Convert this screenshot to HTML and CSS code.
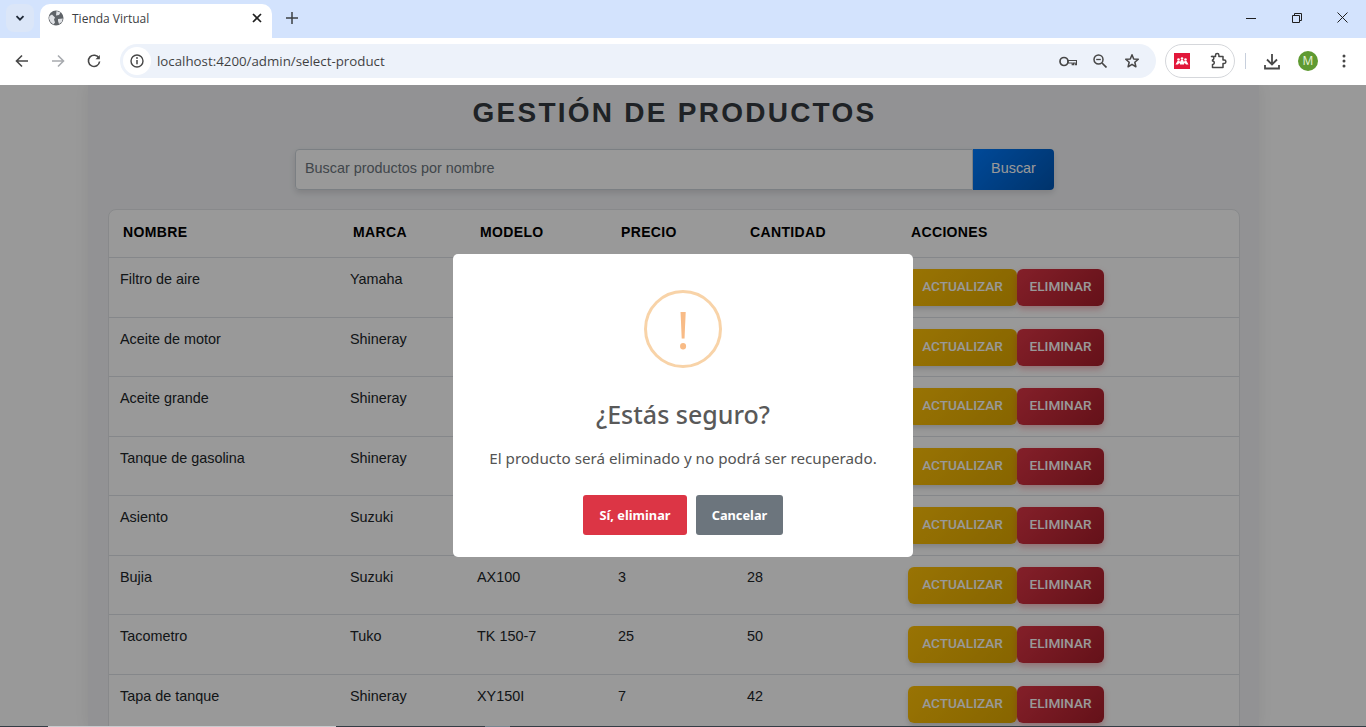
FILE: index.html
```html
<!DOCTYPE html>
<html lang="es">
<head>
<meta charset="utf-8">
<title>Tienda Virtual</title>
<link rel="stylesheet" href="styles.css">
</head>
<body>
<div class="browser">
  <div class="tabstrip">
    <div class="tab-search"><svg width="12" height="12" viewBox="0 0 12 12"><path d="M2.500 4.200 6 7.700l3.500-3.500" fill="none" stroke="#1f2937" stroke-width="1.800"/></svg></div>
    <div class="tab">
      <svg class="favicon" width="16" height="16" viewBox="0 0 16 16"><circle cx="8" cy="8" r="7.500" fill="#5f6368"/><path d="M1.500 6 4 4.500 7 7.500 6 9.500 7 12.500 5.500 14.500 2.500 12 1 8.500ZM8.500 1 12.500 2.500 11 5 8 5.500ZM10 9l4.800-.5-1 3.500-2.800 2-1-3Z" fill="#dfe1e5"/></svg>
      <span class="tab-title">Tienda Virtual</span>
      <svg class="tab-close" width="10" height="10" viewBox="0 0 10 10"><path d="M1 1l8 8M9 1l-8 8" stroke="#1f1f1f" stroke-width="1.700"/></svg>
    </div>
    <svg class="newtab" width="12" height="12" viewBox="0 0 12 12"><path d="M6 0v12M0 6h12" stroke="#3c4043" stroke-width="1.500"/></svg>
    <div class="win-controls">
      <svg width="10" height="10" viewBox="0 0 10 10"><path d="M0 5.500h10" stroke="#1f1f1f"/></svg>
      <svg width="10" height="10" viewBox="0 0 10 10"><path d="M.5 2.500h7v7h-7zM2.500 2.500v-2h7v7h-2" fill="none" stroke="#1f1f1f"/></svg>
      <svg width="11" height="11" viewBox="0 0 11 11"><path d="M.5.500l10 10M10.500.500l-10 10" stroke="#1f1f1f"/></svg>
    </div>
  </div>
  <div class="toolbar">
    <svg class="nav" width="14" height="14" viewBox="0 0 14 14"><path d="M13 7H2M7 1.500 1.500 7 7 12.500" fill="none" stroke="#474747" stroke-width="1.600"/></svg>
    <svg class="nav" width="14" height="14" viewBox="0 0 14 14"><path d="M1 7h11M7 1.500 12.500 7 7 12.500" fill="none" stroke="#a8abaf" stroke-width="1.600"/></svg>
    <svg class="nav" width="14" height="14" viewBox="0 0 14 14"><path d="M12 4.200A5.600 5.600 0 1 0 12.600 7.500" fill="none" stroke="#474747" stroke-width="1.600"/><path d="M12.800 1v4.300H8.500z" fill="#474747"/></svg>
    <div class="omnibox">
      <div class="site-info"><svg width="14" height="14" viewBox="0 0 14 14"><circle cx="7" cy="7" r="6" fill="none" stroke="#474747" stroke-width="1.400"/><path d="M7 6v4.200" stroke="#474747" stroke-width="1.500"/><circle cx="7" cy="4" r=".9" fill="#474747"/></svg></div>
      <span class="url">localhost:4200/admin/select-product</span>
      <div class="omni-icons">
        <svg width="18" height="11" viewBox="0 0 18 11"><circle cx="5" cy="5.500" r="4" fill="none" stroke="#474747" stroke-width="1.700"/><path d="M9 4.500h8.500v4.200h-1.300V7h-1.700v1.700h-1.300V7H9z" fill="none" stroke="#474747" stroke-width="1.100"/></svg>
        <svg width="14" height="14" viewBox="0 0 14 14"><circle cx="5.500" cy="5.500" r="4.500" fill="none" stroke="#474747" stroke-width="1.500"/><path d="M9 9l4.500 4.500" stroke="#474747" stroke-width="1.700"/><path d="M3.200 5.500h4.600" stroke="#474747" stroke-width="1.300"/></svg>
        <svg class="star" width="16" height="16" viewBox="0 0 16 16"><path d="M8 1.800 9.700 6l4.600.3-3.500 3 1.100 4.500L8 11.300l-3.900 2.500 1.100-4.500-3.500-3L6.300 6z" fill="none" stroke="#474747" stroke-width="1.500" stroke-linejoin="round"/></svg>
      </div>
    </div>
    <div class="ext-pill">
      <svg width="16" height="16" viewBox="0 0 16 16"><rect width="16" height="16" fill="#e2173a"/><g fill="#fff"><circle cx="4.500" cy="6.500" r="1.300"/><circle cx="8" cy="5.500" r="1.300"/><circle cx="11.500" cy="6.500" r="1.300"/><path d="M1.500 11.500 3.500 8h2l.5 1 1-2h2l1 2 .5-1h2l2 3.500h-2.500L10.500 9.800 10 11.500H6L5.500 9.800 4 11.500z"/></g></svg>
      <svg width="18" height="18" viewBox="0 0 18 18"><path d="M2.500 4.500H6.500V3.200a1.700 1.700 0 0 1 3.400 0V4.500H14V8h1.200a1.700 1.700 0 0 1 0 3.400H14V15.500H3.500V12.500a1.600 1.600 0 0 0 0-3.500V8A1.700 1.700 0 0 0 2.500 4.500z" fill="none" stroke="#474747" stroke-width="1.500" stroke-linejoin="round"/></svg>
    </div>
    <div class="divider"></div>
    <svg class="download" width="16" height="17" viewBox="0 0 16 17"><path d="M8 1v10M3 6.500l5 5 5-5M1 12v3.500h14V12" fill="none" stroke="#474747" stroke-width="1.800"/></svg>
    <div class="avatar">M</div>
    <svg class="menu" width="4" height="14" viewBox="0 0 4 14"><circle cx="2" cy="2" r="1.500" fill="#474747"/><circle cx="2" cy="7" r="1.500" fill="#474747"/><circle cx="2" cy="12" r="1.500" fill="#474747"/></svg>
  </div>
  <main class="page">
    <section class="panel">
      <h1 class="title">GESTIÓN DE PRODUCTOS</h1>
      <form class="search">
        <div class="search-input">Buscar productos por nombre</div>
        <button class="search-btn" type="button">Buscar</button>
      </form>
      <div class="table-card">
        <table class="products">
          <colgroup><col class="c1"><col class="c2"><col class="c3"><col class="c4"><col class="c5"><col class="c6"></colgroup>
          <thead><tr><th>NOMBRE</th><th>MARCA</th><th>MODELO</th><th>PRECIO</th><th>CANTIDAD</th><th>ACCIONES</th></tr></thead>
          <tbody>
            <tr><td>Filtro de aire</td><td>Yamaha</td><td></td><td></td><td></td><td class="actions"><button class="btn-up">ACTUALIZAR</button><button class="btn-del">ELIMINAR</button></td></tr>
            <tr><td>Aceite de motor</td><td>Shineray</td><td></td><td></td><td></td><td class="actions"><button class="btn-up">ACTUALIZAR</button><button class="btn-del">ELIMINAR</button></td></tr>
            <tr><td>Aceite grande</td><td>Shineray</td><td></td><td></td><td></td><td class="actions"><button class="btn-up">ACTUALIZAR</button><button class="btn-del">ELIMINAR</button></td></tr>
            <tr><td>Tanque de gasolina</td><td>Shineray</td><td></td><td></td><td></td><td class="actions"><button class="btn-up">ACTUALIZAR</button><button class="btn-del">ELIMINAR</button></td></tr>
            <tr><td>Asiento</td><td>Suzuki</td><td></td><td></td><td></td><td class="actions"><button class="btn-up">ACTUALIZAR</button><button class="btn-del">ELIMINAR</button></td></tr>
            <tr><td>Bujia</td><td>Suzuki</td><td>AX100</td><td>3</td><td>28</td><td class="actions"><button class="btn-up">ACTUALIZAR</button><button class="btn-del">ELIMINAR</button></td></tr>
            <tr><td>Tacometro</td><td>Tuko</td><td>TK 150-7</td><td>25</td><td>50</td><td class="actions"><button class="btn-up">ACTUALIZAR</button><button class="btn-del">ELIMINAR</button></td></tr>
            <tr><td>Tapa de tanque</td><td>Shineray</td><td>XY150I</td><td>7</td><td>42</td><td class="actions"><button class="btn-up">ACTUALIZAR</button><button class="btn-del">ELIMINAR</button></td></tr>
          </tbody>
        </table>
      </div>
    </section>
    <div class="overlay">
      <div class="modal">
        <div class="warn-icon">!</div>
        <h2 class="modal-title">¿Estás seguro?</h2>
        <p class="modal-text">El producto será eliminado y no podrá ser recuperado.</p>
        <div class="modal-actions">
          <button class="confirm">Sí, eliminar</button>
          <button class="cancel">Cancelar</button>
        </div>
      </div>
    </div>
    <div class="edge-strip"><span class="edge-a"></span><span class="edge-b"></span><span class="edge-c"></span><span class="edge-d"></span><span class="edge-e"></span></div>
  </main>
</div>
</body>
</html>
```
FILE: styles.css
```css
* { box-sizing: border-box; }
html, body { margin: 0; height: 100%; overflow: hidden; }
body { font-family: "Liberation Sans", Arial, sans-serif; background: #fff; }
.browser { height: 727px; display: flex; flex-direction: column; }

.tabstrip { height: 38px; flex: none; background: #d3e3fd; display: flex; align-items: flex-start; padding: 4px 0 0 6px; }
.tab-search { width: 28px; height: 28px; border-radius: 8px; background: #dbe6f8; display: flex; align-items: center; justify-content: center; }
.tab { width: 232px; height: 34px; margin-left: 6px; background: #fff; border-radius: 10px 10px 0 0; display: flex; align-items: center; padding: 0 8px 6px 8px; }
.tab-title { margin-left: 8px; flex: 1; font: 12px "Open Sans", sans-serif; color: #3c4043; }
.tab-close { margin-right: 2px; }
.newtab { margin: 8px 0 0 14px; }
.win-controls { margin-left: auto; width: 140px; display: flex; align-items: center; justify-content: space-between; padding: 8px 18px 0 20px; }

.toolbar { height: 47px; flex: none; background: #fff; display: flex; align-items: center; padding: 0 20px 1px 15px; }
.nav { margin-right: 22px; }
.toolbar .nav:nth-child(3) { margin-right: 20px; }
.omnibox { width: 1036px; height: 34px; margin-left: -1px; border-radius: 17px; background: #edf2fa; display: flex; align-items: center; padding: 0 16px 0 3px; }
.site-info { width: 28px; height: 28px; border-radius: 50%; background: #fff; display: flex; align-items: center; justify-content: center; }
.url { margin-left: 6px; font: 13.300px "Open Sans", sans-serif; color: #1f1f1f; opacity: .85; }
.omni-icons { margin-left: auto; display: flex; align-items: center; gap: 16px; }
.omni-icons .star { margin-left: 1px; }
.ext-pill { width: 70px; height: 34px; margin-left: 9px; border: 1px solid #d5d7db; border-radius: 17px; display: flex; align-items: center; justify-content: space-between; padding: 0 7px 0 8px; }
.divider { width: 1px; height: 16px; margin-left: 10px; background: #c7cfdc; }
.download { margin-left: 18px; }
.avatar { width: 20px; height: 20px; margin-left: 18px; border-radius: 50%; background: #5f9a32; color: #e8f3dc; font: 12px/20px "Open Sans", sans-serif; text-align: center; }
.menu { margin-left: 24px; }

.page { position: relative; flex: 1; min-height: 0; overflow: hidden; background: #fff; }
.panel { width: 1171px; height: 100%; margin-left: 88px; padding: 0 20px; background: #f3f4f7; box-shadow: 0 0 14px rgba(0,0,0,.07); }
.title { margin: 0; padding: 9px 0 0 2px; height: 64px; font-size: 28px; line-height: 38px; font-weight: 700; letter-spacing: 2.250px; text-align: center; color: #343a40; }
.search { width: 759px; height: 41px; margin-left: 187px; display: flex; border-radius: 4px; box-shadow: 0 3px 6px rgba(0,0,0,.12); }
.search-input { flex: 1; padding: 0 9px; border: 1px solid #ced4da; border-radius: 4px 0 0 4px; background: #fff; color: #6c757d; font-size: 14.400px; line-height: 37px; }
.search-btn { width: 81px; padding: 0 0 3px; border: 0; border-radius: 0 4px 4px 0; background: linear-gradient(135deg, #007bff, #0056b3); color: #fff; font: 14.400px "Liberation Sans", Arial, sans-serif; }

.table-card { margin-top: 19px; width: 1132px; border: 1px solid #e3e5e8; border-radius: 8px 8px 0 0; background: #fff; }
.products { width: 100%; table-layout: fixed; border-collapse: collapse; font-size: 14.400px; color: #212529; }
.c1 { width: 229px; } .c2 { width: 127px; } .c3 { width: 141px; } .c4 { width: 129px; } .c5 { width: 161px; }
.products th { height: 47.500px; padding: 0 15px 4px; text-align: left; font-size: 14px; letter-spacing: .35px; color: #000; border-bottom: 1px solid #dee2e6; }
.products td { height: 59.500px; padding: 13px 12px; vertical-align: top; line-height: 16px; border-bottom: 1px solid #dee2e6; }
.products th:first-child { padding-left: 14px; }
.products td:first-child { padding-left: 11px; }
.products td.actions { padding: 11px 12px 0; white-space: nowrap; }
.actions button { height: 37px; padding: 0 0 3px; border: 0; border-radius: 6px; color: #fff; font: 500 13.600px Roboto, sans-serif; vertical-align: top; }
.btn-up { width: 109px; background: linear-gradient(135deg, #ffc107, #e0a800); box-shadow: 0 3px 5px rgba(0,0,0,.15); }
.btn-del { width: 87px; background: linear-gradient(135deg, #dc3545, #a71d2a); box-shadow: 0 3px 6px rgba(220,53,69,.35); }

.overlay { position: absolute; inset: 0; background: rgba(0,0,0,.4); display: flex; justify-content: center; align-items: flex-start; padding-top: 169px; }
.modal { width: 460px; height: 303px; padding-top: 36px; border-radius: 5px; background: #fff; display: flex; flex-direction: column; align-items: center; font-family: "Noto Sans", sans-serif; }
.warn-icon { width: 78px; height: 78px; border: 3px solid #f8d3a8; border-radius: 50%; color: #f8bb86; font: 400 52px/72px "Open Sans", sans-serif; text-align: center; }
.modal-title { margin: 26px 0 0; font-size: 25px; line-height: 40px; font-weight: 500; color: #595959; }
.modal-text { margin: 12px 0 0; font-size: 15.200px; line-height: 24px; color: #545454; }
.modal-actions { margin-top: 25px; display: flex; gap: 9px; }
.modal-actions button { height: 40px; padding: 0; border: 0; border-radius: 3px; color: #fff; font: 700 12.800px "Noto Sans", sans-serif; }
.confirm { width: 104px; background: #dc3545; }
.cancel { width: 87px; background: #6c757d; }

.edge-strip { position: absolute; left: 0; right: 0; bottom: 0; height: 1px; display: flex; }
.edge-a, .edge-c, .edge-e { background: #333d45; }
.edge-a { width: 48px; }
.edge-b { width: 288px; background: #c9cbce; }
.edge-c { width: 149px; }
.edge-d { width: 25px; background: #76858f; }
.edge-e { flex: 1; }
```
